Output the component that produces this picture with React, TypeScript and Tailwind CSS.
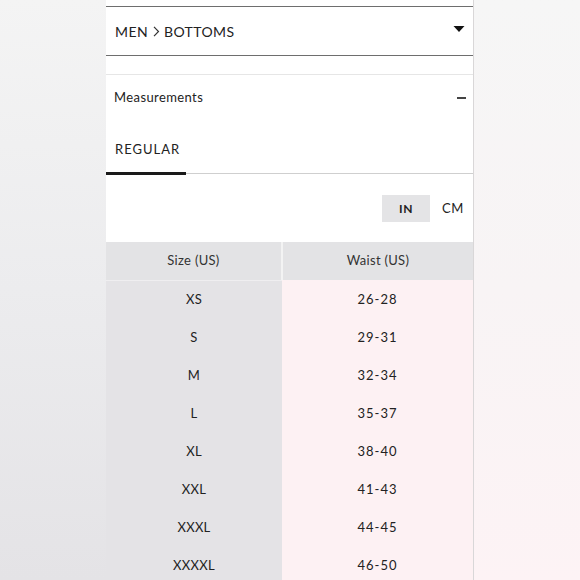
import React from "react";

const rows: [string, string][] = [
  ["XS", "26-28"],
  ["S", "29-31"],
  ["M", "32-34"],
  ["L", "35-37"],
  ["XL", "38-40"],
  ["XXL", "41-43"],
  ["XXXL", "44-45"],
  ["XXXXL", "46-50"],
];

export default function App() {
  return (
    <div
      className="w-[580px] h-[580px] overflow-hidden flex text-[#222]"
      style={{ fontFamily: "Lato, 'Noto Sans', sans-serif" }}
    >
      <div className="w-[106px] h-full bg-gradient-to-b from-[#f4f4f4] via-[#ececee] to-[#e4e3e6]" />
      <div className="w-[368px] h-full bg-white flex flex-col border-r border-[#d9d7d8]">
        <div className="h-[6px] shrink-0" />
        <div className="h-[50px] shrink-0 border-t-[1.5px] border-b-[1.5px] border-[#6e6e6e] flex items-center justify-between pl-[9px] pr-[8px]">
          <span className="text-[14px] tracking-[0.4px] text-[#222] flex items-center">
            MEN
            <svg width="14" height="11" viewBox="0 0 14 11" className="mx-[1px]">
              <path d="M5 0.8 L9.5 5.5 L5 10.2" fill="none" stroke="#333" strokeWidth="1.2" />
            </svg>
            BOTTOMS
          </span>
          <svg width="12" height="8" viewBox="0 0 12 8" className="mb-[4px]">
            <path d="M0.5 1 L11.5 1 L6 7 Z" fill="#111" />
          </svg>
        </div>
        <div className="h-[19px] shrink-0 border-b border-[#e6e6e6]" />
        <div className="h-[46px] shrink-0 flex items-center justify-between pl-[8px] pr-[7px]">
          <span className="text-[13px] tracking-[0.4px] text-[#222]">Measurements</span>
          <div className="w-[9px] h-[2px] bg-[#444]" />
        </div>
        <div className="h-[54px] shrink-0 flex items-end">
          <div className="w-[80px] h-full flex flex-col justify-between">
            <div className="h-[51px] flex items-center pl-[9px] pt-[6px]">
              <span className="text-[13px] tracking-[1px] text-[#222]">REGULAR</span>
            </div>
            <div className="h-[3px] bg-[#1a1a1a]" />
          </div>
          <div className="flex-1 h-[1px] mb-[1px] bg-[#cfcfcf]" />
        </div>
        <div className="h-[20px] shrink-0" />
        <div className="flex justify-end shrink-0">
          <div className="w-[48px] h-[27px] bg-[#e4e4e6] flex items-center justify-center text-[12px] font-bold tracking-[0.5px]">IN</div>
          <div className="w-[43px] h-[27px] bg-white flex items-center justify-center pl-[3px] text-[13px] tracking-[0.5px]">CM</div>
        </div>
        <div className="h-[20px] shrink-0" />
        <div className="flex h-[38px] shrink-0 text-[13px] text-[#333] tracking-[0.3px]">
          <div className="w-[175px] bg-[#e3e3e5] flex items-center justify-center">Size (US)</div>
          <div className="w-[2px] bg-[#f3f3f3]" />
          <div className="flex-1 bg-[#e3e3e5] flex items-center justify-center">Waist (US)</div>
        </div>
        <div className="flex flex-1 text-[13px] text-[#222]">
          <div className="w-[176px] bg-[#e4e3e6] flex flex-col border-t border-[#efeef0]">
            {rows.map(([s]) => (
              <div key={s} className="h-[38px] shrink-0 flex items-center justify-center tracking-[0.3px]">
                {s}
              </div>
            ))}
          </div>
          <div className="flex-1 bg-[#fdf1f3] flex flex-col pt-[1px]">
            {rows.map(([s, w]) => (
              <div key={s} className="h-[38px] shrink-0 flex items-center justify-center tracking-[1px]">
                {w}
              </div>
            ))}
          </div>
        </div>
      </div>
      <div className="flex-1 h-full bg-gradient-to-b from-[#f6f6f6] via-[#f8f4f5] to-[#fdf3f5]" />
    </div>
  );
}
